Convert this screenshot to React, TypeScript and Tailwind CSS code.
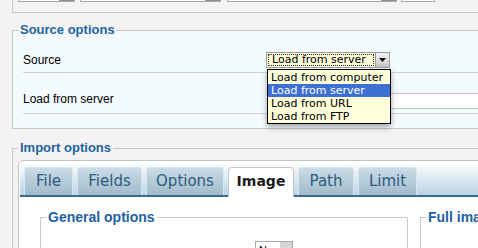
const tabs = [
  { label: "File", w: "w-[49px]" },
  { label: "Fields", w: "w-[65px]" },
  { label: "Options", w: "w-[78px]" },
  { label: "Image", w: "w-[66px]", active: true },
  { label: "Path", w: "w-[56px]" },
  { label: "Limit", w: "w-[59px]" },
];

const options = ["Load from computer", "Load from server", "Load from URL", "Load from FTP"];

const TopInput = ({ w, btn }: { w: string; btn?: boolean }) => (
  <div className={`${w} h-[16px] flex justify-end border border-[#a9a9a9] bg-white`}>
    {btn && <div className="w-[15px] h-full bg-[#8f8f8f]" />}
  </div>
);

const App = () => {
  return (
    <div className="w-[478px] h-[248px] overflow-hidden bg-[#f3f3f3] font-['Liberation_Sans',Arial,sans-serif] text-[12px] text-black">
      {/* previous panel, cut off at the top */}
      <div className="ml-[12px] h-[13px] border-l border-b border-[#c8c8c8] overflow-hidden">
        <div className="flex -mt-[14px] ml-[5px]">
          <TopInput w="w-[57px]" btn />
          <div className="w-[5px]" />
          <TopInput w="w-[141px]" btn />
          <div className="w-[6px]" />
          <TopInput w="w-[170px]" btn />
          <div className="w-[4px]" />
          <TopInput w="w-[34px]" />
        </div>
      </div>

      {/* Source options */}
      <fieldset className="mt-[9px] ml-[12px] w-[520px] border border-[#c8c8c8] bg-[#f4fbff] pl-[6px] pb-[14px]">
        <legend className="px-[1px] text-[13px] leading-[16px] font-bold text-[#1f62a0]">Source options</legend>
        <div className="pt-[10px] ml-[4px]">
          <div className="flex items-center h-[25px] border-b border-[#d2d2d2]">
            <div className="w-[243px]">Source</div>
            <div className="relative">
              <div className="flex w-[124px] h-[16px] border border-[#9c9c9c] bg-[#ffffdc] font-['DejaVu_Sans',Verdana,sans-serif] text-[11px] leading-[12px]">
                <div className="flex-1 m-[1px] pl-[3px] border border-dotted border-[#333] flex items-center">Load from server</div>
                <div className="w-[14px] border-l border-[#9c9c9c] bg-linear-to-b from-[#f4f4f4] to-[#c4c4c4] flex items-center justify-center">
                  <svg width="7" height="4" viewBox="0 0 7 4">
                    <path d="M0 0h7L3.5 4z" fill="#111" />
                  </svg>
                </div>
              </div>
              <div className="absolute left-[1px] top-[17px] z-10 w-[124px] border border-black bg-[#ffffdc] shadow-[0_3px_6px_rgba(0,0,0,0.35)] font-['DejaVu_Sans',Verdana,sans-serif] text-[11px] leading-[13px] py-[0.5px]">
                {options.map((o) => (
                  <div
                    key={o}
                    className={`h-[13px] pl-[3px] whitespace-nowrap ${o === "Load from server" ? "bg-[#3d6fd5] text-white" : ""}`}
                  >
                    {o}
                  </div>
                ))}
              </div>
            </div>
          </div>
          <div className="flex items-end h-[41px] pb-[4px] border-b border-[#d2d2d2]">
            <div className="w-[243px] leading-[16px] mb-[2px]">Load from server</div>
            <div className="flex-1 h-[16px] bg-white border-y border-[#c4c4c4]" />
          </div>
        </div>
      </fieldset>

      {/* Import options */}
      <fieldset className="mt-[11px] ml-[12px] w-[520px] border border-[#c8c8c8] pl-[5px]">
        <legend className="px-[2px] text-[13px] leading-[16px] font-bold text-[#1f62a0]">Import options</legend>
        <div className="mt-[4px] border border-[#c4c4c4] rounded-[5px] bg-white p-[1px]">
          <div className="flex items-end gap-[4px] pl-[4px] pt-[5px] rounded-t-[4px] bg-linear-to-b from-white to-[#b9d4e4] border-b-2 border-[#3a6b8f] font-['DejaVu_Sans',Verdana,sans-serif] text-[15px]">
            {tabs.map((t) =>
              t.active ? (
                <div
                  key={t.label}
                  className={`${t.w} h-[30px] -mb-[2px] pb-[2px] flex items-center justify-center rounded-t-[4px] border border-b-0 border-[#c6c6c6] bg-white text-[#1a1a1a] text-[14px] font-bold`}
                >
                  {t.label}
                </div>
              ) : (
                <div
                  key={t.label}
                  className={`${t.w} h-[28px] flex items-center justify-center rounded-t-[4px] border border-b-0 border-[#d9e5ec] bg-linear-to-b from-[#c9dce7] to-[#a2bbca] text-[#2d5b7e]`}
                >
                  {t.label}
                </div>
              )
            )}
          </div>
          <div className="flex pl-[20px] pt-[11px] h-[60px]">
            <fieldset className="w-[368px] border border-[#c8c8c8] pl-[5px]">
              <legend className="px-[2px] text-[14px] leading-[18px] font-bold text-[#1f62a0]">General options</legend>
              <div className="flex items-start pt-[15px] pl-[5px]">
                <div className="w-[204px] pt-[3px]">Process images</div>
                <div className="flex w-[38px] h-[16px] border border-[#a9a9a9] bg-white text-[11px] pl-[3px]">
                  <span className="flex-1">No</span>
                  <div className="w-[12px] bg-[#d6d6d6]" />
                </div>
              </div>
            </fieldset>
            <fieldset className="ml-[12px] w-[200px] border border-[#c8c8c8] pl-[5px]">
              <legend className="px-[2px] text-[14px] leading-[18px] font-bold text-[#1f62a0] whitespace-nowrap">Full image</legend>
              <div className="pt-[18px] pl-[2px]">Keep original</div>
            </fieldset>
          </div>
        </div>
      </fieldset>
    </div>
  );
};

export default App;
